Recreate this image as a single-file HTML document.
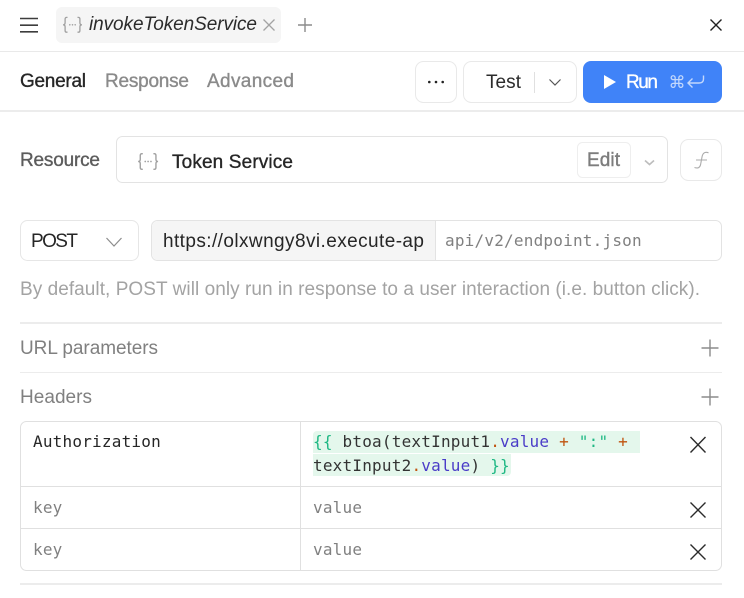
<!DOCTYPE html>
<html>
<head>
<meta charset="utf-8">
<style>
html,body{margin:0;padding:0;background:#fff;width:744px;height:598px;overflow:hidden}
svg{display:block}
text{font-family:"Liberation Sans",sans-serif;font-size:19px;white-space:pre}
.m{font-family:"DejaVu Sans Mono","Liberation Mono",monospace;font-size:16px;letter-spacing:.21px}
.med{stroke:currentColor;stroke-width:.35px}
</style>
</head>
<body>
<svg width="744" height="598" viewBox="0 0 744 598" xmlns="http://www.w3.org/2000/svg">
<defs>
<g id="br" fill="none" stroke="#a0a0a0" stroke-width="1.3">
<path d="M5 .6H4.2Q2.6 .6 2.6 2.2V6Q2.6 8 .6 8Q2.6 8 2.6 10V13.8Q2.6 15.4 4.2 15.4H5"/>
<path d="M15 .6H15.8Q17.4 .6 17.4 2.2V6Q17.4 8 19.4 8Q17.4 8 17.4 10V13.800Q17.4 15.4 15.8 15.4H15"/>
<circle cx="7.300" cy="8" r=".8" fill="#a0a0a0" stroke="none"/><circle cx="10" cy="8" r=".8" fill="#a0a0a0" stroke="none"/><circle cx="12.700" cy="8" r=".8" fill="#a0a0a0" stroke="none"/>
</g>
</defs>

<!-- top bar -->
<path d="M20 18.5H38M20 25.2H38M20 31.8H38" stroke="#3d3d3d" stroke-width="1.6" fill="none"/>
<rect x="56" y="7" width="225" height="36" rx="6" fill="#f5f5f5"/>
<use href="#br" x="62.5" y="16.8"/>
<text x="89" y="30" font-style="italic" fill="#2b2b2b" textLength="168" lengthAdjust="spacing">invokeTokenService</text>
<path d="M263.5 19.5L274.5 30.5M274.5 19.5L263.5 30.5" stroke="#a3a3a3" stroke-width="1.3" fill="none"/>
<path d="M305 18V32M298 25H312" stroke="#8c8c8c" stroke-width="1.4" fill="none"/>
<path d="M710.5 19.5L721.5 30.5M721.5 19.5L710.5 30.5" stroke="#222" stroke-width="1.4" fill="none"/>
<rect x="0" y="51" width="744" height="1" fill="#e9e9e9"/>

<!-- tabs -->
<text x="20" y="87" fill="#262626" color="#262626" class="med" textLength="66" lengthAdjust="spacing">General</text>
<text x="105" y="87" fill="#8a8a8a" color="#8a8a8a" class="med" textLength="84" lengthAdjust="spacing">Response</text>
<text x="207" y="87" fill="#8a8a8a" color="#8a8a8a" class="med" textLength="87" lengthAdjust="spacing">Advanced</text>

<rect x="415.5" y="61.5" width="41" height="41" rx="8" fill="#fff" stroke="#e9e9e9"/>
<circle cx="429.3" cy="82" r="1.3" fill="#222"/><circle cx="436" cy="82" r="1.3" fill="#222"/><circle cx="442.7" cy="82" r="1.3" fill="#222"/>
<rect x="463.5" y="61.5" width="113" height="41" rx="8" fill="#fff" stroke="#e9e9e9"/>
<text x="486" y="88" fill="#2b2b2b" textLength="35" lengthAdjust="spacing">Test</text>
<rect x="534" y="72" width="1" height="21" fill="#e0e0e0"/>
<path d="M549.5 79.5L555 85L560.5 79.5" stroke="#555" stroke-width="1.2" fill="none"/>
<rect x="583" y="61" width="139" height="42" rx="8" fill="#4083f8"/>
<path d="M604 75V89L616 82Z" fill="#fff"/>
<text x="626" y="88" fill="#fff" color="#fff" class="med" textLength="32" lengthAdjust="spacing">Run</text>
<text x="668.500" y="88" fill="#c3d8fc" style="font-family:'DejaVu Sans',sans-serif;font-size:17px">⌘</text>
<path d="M703.5 75.5V79Q703.5 83 699 83H688M692.5 78.5L688 83L692.5 87.5" fill="none" stroke="#c3d8fc" stroke-width="1.4"/>
<rect x="0" y="110" width="744" height="2" fill="#ececec"/>

<!-- resource -->
<text x="20" y="166" fill="#5c5c5c" color="#5c5c5c" class="med" textLength="80" lengthAdjust="spacing">Resource</text>
<rect x="116.5" y="136.5" width="551" height="46" rx="6" fill="#fff" stroke="#e3e3e3"/>
<use href="#br" transform="translate(137.5 153) scale(1.06)"/>
<text x="172" y="168" fill="#262626" color="#262626" class="med" textLength="121" lengthAdjust="spacing">Token Service</text>
<rect x="577.5" y="142.5" width="53" height="35" rx="5" fill="#fff" stroke="#eeeeee"/>
<text x="587" y="166" fill="#7d7d7d" color="#7d7d7d" class="med" style="stroke-width:.4px" textLength="33" lengthAdjust="spacing">Edit</text>
<path d="M645 160.5L649.5 164.5L654 160.5" stroke="#bdbdbd" stroke-width="1.6" fill="none"/>
<rect x="680.5" y="139.5" width="41" height="41" rx="8" fill="#fff" stroke="#e9e9e9"/>
<path d="M708.5 152.8C704.5 151.3 702.6 153.5 702 157L700.6 164.5C700 167.5 698 168.7 694.5 167.5M696 160H707" fill="none" stroke="#ababab" stroke-width="1.1"/>

<!-- request -->
<rect x="20.500" y="220.500" width="118" height="40" rx="7" fill="#fff" stroke="#e6e6e6"/>
<text x="31" y="247" fill="#262626" textLength="47" lengthAdjust="spacing">POST</text>
<path d="M106.500 238L114 246L121.500 238" stroke="#8c8c8c" stroke-width="1.2" fill="none"/>
<rect x="151.500" y="220.500" width="570" height="40" rx="6" fill="#fff" stroke="#e3e3e3"/>
<path d="M435 221H157.500A6 6 0 0 0 152 227V254A6 6 0 0 0 157.500 260H435Z" fill="#f5f5f5"/>
<rect x="435" y="221" width="1" height="39" fill="#e3e3e3"/>
<text x="163" y="247" fill="#262626" textLength="261" lengthAdjust="spacing">https://olxwngy8vi.execute-ap</text>
<text x="445" y="246" class="m" fill="#808080">api/v2/endpoint.json</text>
<text x="20" y="295" fill="#a3a3a3" textLength="680" lengthAdjust="spacing">By default, POST will only run in response to a user interaction (i.e. button click).</text>

<!-- sections -->
<rect x="20" y="322" width="702" height="2" fill="#ececec"/>
<text x="20" y="354" fill="#808080" textLength="138" lengthAdjust="spacing">URL parameters</text>
<path d="M710 339.500V356.500M701.500 348H718.500" stroke="#8c8c8c" stroke-width="1.4" fill="none"/>
<rect x="20" y="372" width="702" height="1" fill="#ececec"/>
<text x="20" y="403" fill="#808080" textLength="72" lengthAdjust="spacing">Headers</text>
<path d="M710 388.500V405.500M701.500 397H718.500" stroke="#8c8c8c" stroke-width="1.4" fill="none"/>

<!-- table -->
<rect x="20.500" y="421.500" width="701" height="149" rx="6" fill="#fff" stroke="#e0e0e0"/>
<rect x="21" y="486" width="700" height="1" fill="#e0e0e0"/>
<rect x="21" y="528" width="700" height="1" fill="#e0e0e0"/>
<rect x="300" y="422" width="1" height="148" fill="#e0e0e0"/>

<path d="M317 431H640V453H313V435A4 4 0 0 1 317 431Z" fill="#e4f7ec"/>
<path d="M313 454H511V472A4 4 0 0 1 507 476H313Z" fill="#e4f7ec"/>

<text x="33" y="447" class="m" fill="#262626">Authorization</text>
<text x="313" y="447" class="m" fill="#333"><tspan fill="#1fb884">{{</tspan> btoa(textInput1<tspan fill="#c0540f">.</tspan><tspan fill="#4a3cc8">value</tspan> <tspan fill="#c0540f">+</tspan> <tspan fill="#1fb884">":"</tspan> <tspan fill="#c0540f">+</tspan></text>
<text x="313" y="471" class="m" fill="#333">textInput2<tspan fill="#c0540f">.</tspan><tspan fill="#4a3cc8">value</tspan>) <tspan fill="#1fb884">}}</tspan></text>
<text x="33" y="513" class="m" fill="#808080">key</text>
<text x="313" y="513" class="m" fill="#808080">value</text>
<text x="33" y="555" class="m" fill="#808080">key</text>
<text x="313" y="555" class="m" fill="#808080">value</text>

<path d="M690.5 437L705.5 452.500M705.500 437L690.500 452.500" stroke="#2b2b2b" stroke-width="1.4" fill="none"/>
<path d="M690.500 502.500L705.500 517.500M705.500 502.500L690.500 517.500" stroke="#2b2b2b" stroke-width="1.4" fill="none"/>
<path d="M690.500 544.500L705.500 559.500M705.500 544.500L690.500 559.500" stroke="#2b2b2b" stroke-width="1.4" fill="none"/>

<rect x="20" y="583" width="702" height="2" fill="#ececec"/>
</svg>
</body>
</html>
